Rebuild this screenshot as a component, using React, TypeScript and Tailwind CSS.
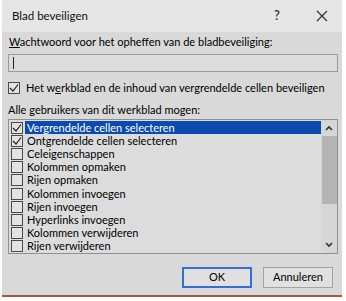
import React from 'react';

const items = [
  { label: 'Vergrendelde cellen selecteren', checked: true, selected: true },
  { label: 'Ontgrendelde cellen selecteren', checked: true },
  { label: 'Celeigenschappen' },
  { label: 'Kolommen opmaken' },
  { label: 'Rijen opmaken' },
  { label: 'Kolommen invoegen' },
  { label: 'Rijen invoegen' },
  { label: 'Hyperlinks invoegen' },
  { label: 'Kolommen verwijderen' },
  { label: 'Rijen verwijderen' },
];

function Box({ checked }: { checked?: boolean }) {
  return (
    <span className="w-[12px] h-[12px] border border-[#4a4a4a] bg-[#e2e2e2] flex items-center justify-center shrink-0">
      {checked && (
        <svg width="10" height="10" viewBox="0 0 10 10">
          <path d="M1 5 L4 8 L9 1.5" fill="none" stroke="#222" strokeWidth="1.2" />
        </svg>
      )}
    </span>
  );
}

export default function App() {
  return (
    <div className="w-[346px] h-[301px] bg-white" style={{ fontFamily: '"Segoe UI", Lato, sans-serif' }}>
      <div className="ml-[2px] w-[340px] h-[297px] bg-[#d9d9d9] border-b-2 border-[#a65a3c] flex flex-col text-[11px] text-black whitespace-nowrap">
        <div className="h-[32px] bg-[#e5e5e5] flex items-center pl-[10px] shrink-0">
          <span className="text-[11.5px] text-[#111]">Blad beveiligen</span>
          <span className="ml-auto text-[13px] font-semibold text-[#333] mr-[36px]">?</span>
          <svg width="12" height="12" viewBox="0 0 12 12" className="mr-[14px]">
            <path d="M1 1 L11 11 M11 1 L1 11" stroke="#333" strokeWidth="1.2" />
          </svg>
        </div>

        <div className="px-[6px] flex flex-col">
          <div className="mt-[2px] h-[16px] leading-[16px] pl-[1px]">
            <span className="underline">W</span>achtwoord voor het opheffen van de bladbeveiliging:
          </div>
          <div className="mt-[4px] h-[18px] w-[330px] border border-[#9a9a9a] bg-[#dcdcdc] flex items-center pl-[4px]">
            <span className="w-px h-[12px] bg-[#222]" />
          </div>

          <div className="mt-[8px] h-[16px] flex items-center gap-[6px]">
            <Box checked />
            <span>
              Het w<span className="underline">e</span>rkblad en de inhoud van vergrendelde cellen beveiligen
            </span>
          </div>

          <div className="mt-[6px] h-[16px] leading-[16px]">
            Alle <span className="underline">g</span>ebruikers van dit werkblad mogen:
          </div>

          <div className="mt-[1px] h-[135px] w-[330px] border border-[#8f8f8f] bg-[#dcdcdc] flex">
            <div className="flex-1 flex flex-col pt-px">
              {items.map((it) => (
                <div key={it.label} className="h-[13.3px] flex items-center">
                  <span className="ml-[2px] mr-[2px]">
                    <Box checked={it.checked} />
                  </span>
                  <span
                    className={
                      'h-full flex-1 flex items-center pl-[2px] leading-[12px] ' +
                      (it.selected ? 'bg-[#0b4aae] text-white' : '')
                    }
                  >
                    {it.label}
                  </span>
                </div>
              ))}
            </div>
            <div className="w-[16px] bg-[#d6d6d6] flex flex-col items-center">
              <div className="h-[16px] flex items-center justify-center">
                <svg width="8" height="6" viewBox="0 0 8 6">
                  <path d="M1 5 L4 2 L7 5" fill="none" stroke="#333" strokeWidth="1.6" />
                </svg>
              </div>
              <div className="w-[15px] h-[68px] bg-[#b4b4b4]" />
              <div className="mt-auto h-[16px] flex items-center justify-center">
                <svg width="8" height="6" viewBox="0 0 8 6">
                  <path d="M1 1 L4 4 L7 1" fill="none" stroke="#333" strokeWidth="1.6" />
                </svg>
              </div>
            </div>
          </div>

          <div className="mt-[13px] flex justify-end gap-[11px] pr-[3px]">
            <button className="w-[70px] h-[21px] border-2 border-[#2f6fd6] bg-[#e0e0e0] text-[11px] text-black">
              OK
            </button>
            <button className="w-[70px] h-[21px] border border-[#a3a3a3] bg-[#e0e0e0] text-[11px] text-black">
              Annuleren
            </button>
          </div>
        </div>
      </div>
    </div>
  );
}
